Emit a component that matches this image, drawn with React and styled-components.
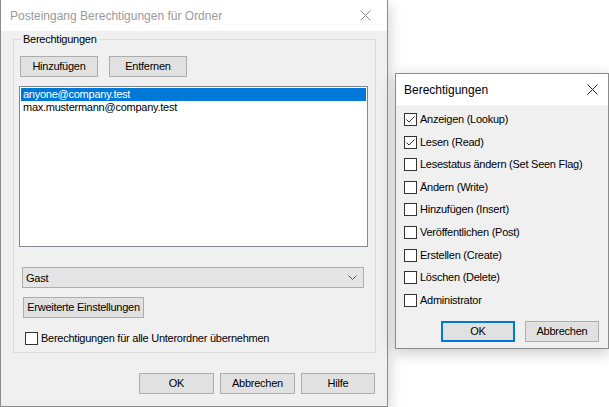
import styled, { createGlobalStyle } from "styled-components";

const Global = createGlobalStyle`
  html, body { margin: 0; padding: 0; background: #ffffff; }
  body {
    font-family: "Liberation Sans", Arial, sans-serif;
    font-size: 11px;
    letter-spacing: -0.25px;
    color: #000;
  }
`;

const Desktop = styled.div`
  position: relative;
  width: 609px;
  height: 407px;
  overflow: hidden;
  background: #ffffff;
`;

const Window = styled.div`
  position: absolute;
  left: ${(p) => p.$x}px;
  top: ${(p) => p.$y}px;
  width: ${(p) => p.$w}px;
  height: ${(p) => p.$h}px;
  box-sizing: border-box;
  border: 1px solid #8c8c8c;
  border-top: ${(p) => (p.$noTop ? "none" : "1px solid #8c8c8c")};
  background: #f0f0f0;
  box-shadow: 0 4px 14px rgba(0, 0, 0, 0.22);
  display: flex;
  flex-direction: column;
`;

const TitleBar = styled.div`
  height: 31px;
  flex: none;
  background: #ffffff;
  display: flex;
  align-items: center;
  justify-content: space-between;
  padding: 0 ${(p) => p.$pr}px 0 ${(p) => p.$pl}px;
  font-family: "Liberation Sans", Arial, sans-serif;
  font-size: 12px;
  letter-spacing: 0;
  color: ${(p) => (p.$inactive ? "#9a9a9a" : "#000000")};
`;

const CloseIcon = ({ color }) => (
  <svg width="11" height="11" viewBox="0 0 11 11">
    <path d="M0.5 0.5 L10.5 10.5 M10.5 0.5 L0.5 10.5" stroke={color} strokeWidth="1" />
  </svg>
);

const Body = styled.div`
  flex: 1;
  display: flex;
  flex-direction: column;
`;

const GroupBox = styled.div`
  margin: 8px 0 0 12px;
  width: 363px;
  height: 314px;
  box-sizing: border-box;
  border: 1px solid #dcdcdc;
  display: flex;
  flex-direction: column;
`;

const Legend = styled.div`
  align-self: flex-start;
  margin: -7px 0 0 7px;
  padding: 0 2px;
  line-height: 13px;
  background: #f0f0f0;
`;

const Row = styled.div`
  display: flex;
  gap: ${(p) => p.$gap || 0}px;
  margin: ${(p) => p.$m || "0"};
  justify-content: ${(p) => p.$justify || "flex-start"};
  align-items: center;
`;

const Button = styled.div`
  width: ${(p) => p.$w}px;
  height: 21px;
  box-sizing: border-box;
  border: ${(p) => (p.$default ? "2px solid #0078d7" : "1px solid #adadad")};
  background: #e1e1e1;
  display: flex;
  align-items: center;
  justify-content: center;
  line-height: 13px;
  white-space: nowrap;
`;

const ListBox = styled.div`
  margin: 9px 0 0 5px;
  width: 349px;
  height: 161px;
  box-sizing: border-box;
  border: 1px solid #828790;
  background: #ffffff;
  padding: 1px;
`;

const ListItem = styled.div`
  height: 13px;
  line-height: 13px;
  padding-left: 2px;
  background: ${(p) => (p.$selected ? "#0078d7" : "transparent")};
  color: ${(p) => (p.$selected ? "#ffffff" : "#000000")};
`;

const Select = styled.div`
  margin: 20px 0 0 8px;
  width: 342px;
  height: 21px;
  box-sizing: border-box;
  border: 1px solid #adadad;
  background: #e5e5e5;
  display: flex;
  align-items: center;
  justify-content: space-between;
  padding: 0 6px 0 3px;
`;

const Chevron = () => (
  <svg width="9" height="5" viewBox="0 0 9 5">
    <path d="M0.5 0.5 L4.5 4.5 L8.5 0.5" stroke="#555" strokeWidth="1" fill="none" />
  </svg>
);

const CheckRow = styled.div`
  display: flex;
  align-items: center;
  gap: 3px;
  height: 13px;
  line-height: 13px;
  margin: ${(p) => p.$m || "0"};
  white-space: nowrap;
`;

const Box = styled.div`
  width: 13px;
  height: 13px;
  box-sizing: border-box;
  border: 1px solid #333333;
  background: #ffffff;
  flex: none;
  display: flex;
  align-items: center;
  justify-content: center;
`;

const Check = () => (
  <svg width="11" height="11" viewBox="0 0 11 11">
    <path d="M1.5 5.5 L4 8 L9.5 2.5" stroke="#333" strokeWidth="1" fill="none" />
  </svg>
);

const Checkbox = ({ checked, label, m }) => (
  <CheckRow $m={m}>
    <Box>{checked && <Check />}</Box>
    <span>{label}</span>
  </CheckRow>
);

const PermList = styled.div`
  display: flex;
  flex-direction: column;
  gap: 9.6px;
  padding: 8px 0 0 8px;
`;

const perms = [
  ["Anzeigen (Lookup)", true],
  ["Lesen (Read)", true],
  ["Lesestatus ändern (Set Seen Flag)", false],
  ["Ändern (Write)", false],
  ["Hinzufügen (Insert)", false],
  ["Veröffentlichen (Post)", false],
  ["Erstellen (Create)", false],
  ["Löschen (Delete)", false],
  ["Administrator", false],
];

export default function App() {
  return (
    <Desktop>
      <Global />
      <Window $x={0} $y={0} $w={388} $h={407} $noTop>
        <TitleBar $inactive $pl={9} $pr={16}>
          <span>Posteingang Berechtigungen für Ordner</span>
          <CloseIcon color="#8a8a8a" />
        </TitleBar>
        <Body>
          <GroupBox>
            <Legend>Berechtigungen</Legend>
            <Row $gap={11} $m="10px 0 0 6px">
              <Button $w={78}>Hinzufügen</Button>
              <Button $w={78}>Entfernen</Button>
            </Row>
            <ListBox>
              <ListItem $selected>anyone@company.test</ListItem>
              <ListItem>max.mustermann@company.test</ListItem>
            </ListBox>
            <Select>
              <span>Gast</span>
              <Chevron />
            </Select>
            <Row $m="9px 0 0 9px">
              <Button $w={121}>Erweiterte Einstellungen</Button>
            </Row>
            <Checkbox m="14px 0 0 11px" label="Berechtigungen für alle Unterordner übernehmen" />
          </GroupBox>
          <Row $gap={6} $justify="flex-end" $m="20px 12px 0 0">
            <Button $w={75}>OK</Button>
            <Button $w={75}>Abbrechen</Button>
            <Button $w={74}>Hilfe</Button>
          </Row>
        </Body>
      </Window>

      <Window $x={395} $y={73} $w={214} $h={276}>
        <TitleBar $pl={8} $pr={10}>
          <span>Berechtigungen</span>
          <CloseIcon color="#222" />
        </TitleBar>
        <Body>
          <PermList>
            {perms.map(([label, checked]) => (
              <Checkbox key={label} label={label} checked={checked} />
            ))}
          </PermList>
          <Row $gap={10} $justify="flex-end" $m="14px 9px 0 0">
            <Button $w={74} $default>OK</Button>
            <Button $w={74}>Abbrechen</Button>
          </Row>
        </Body>
      </Window>
    </Desktop>
  );
}
